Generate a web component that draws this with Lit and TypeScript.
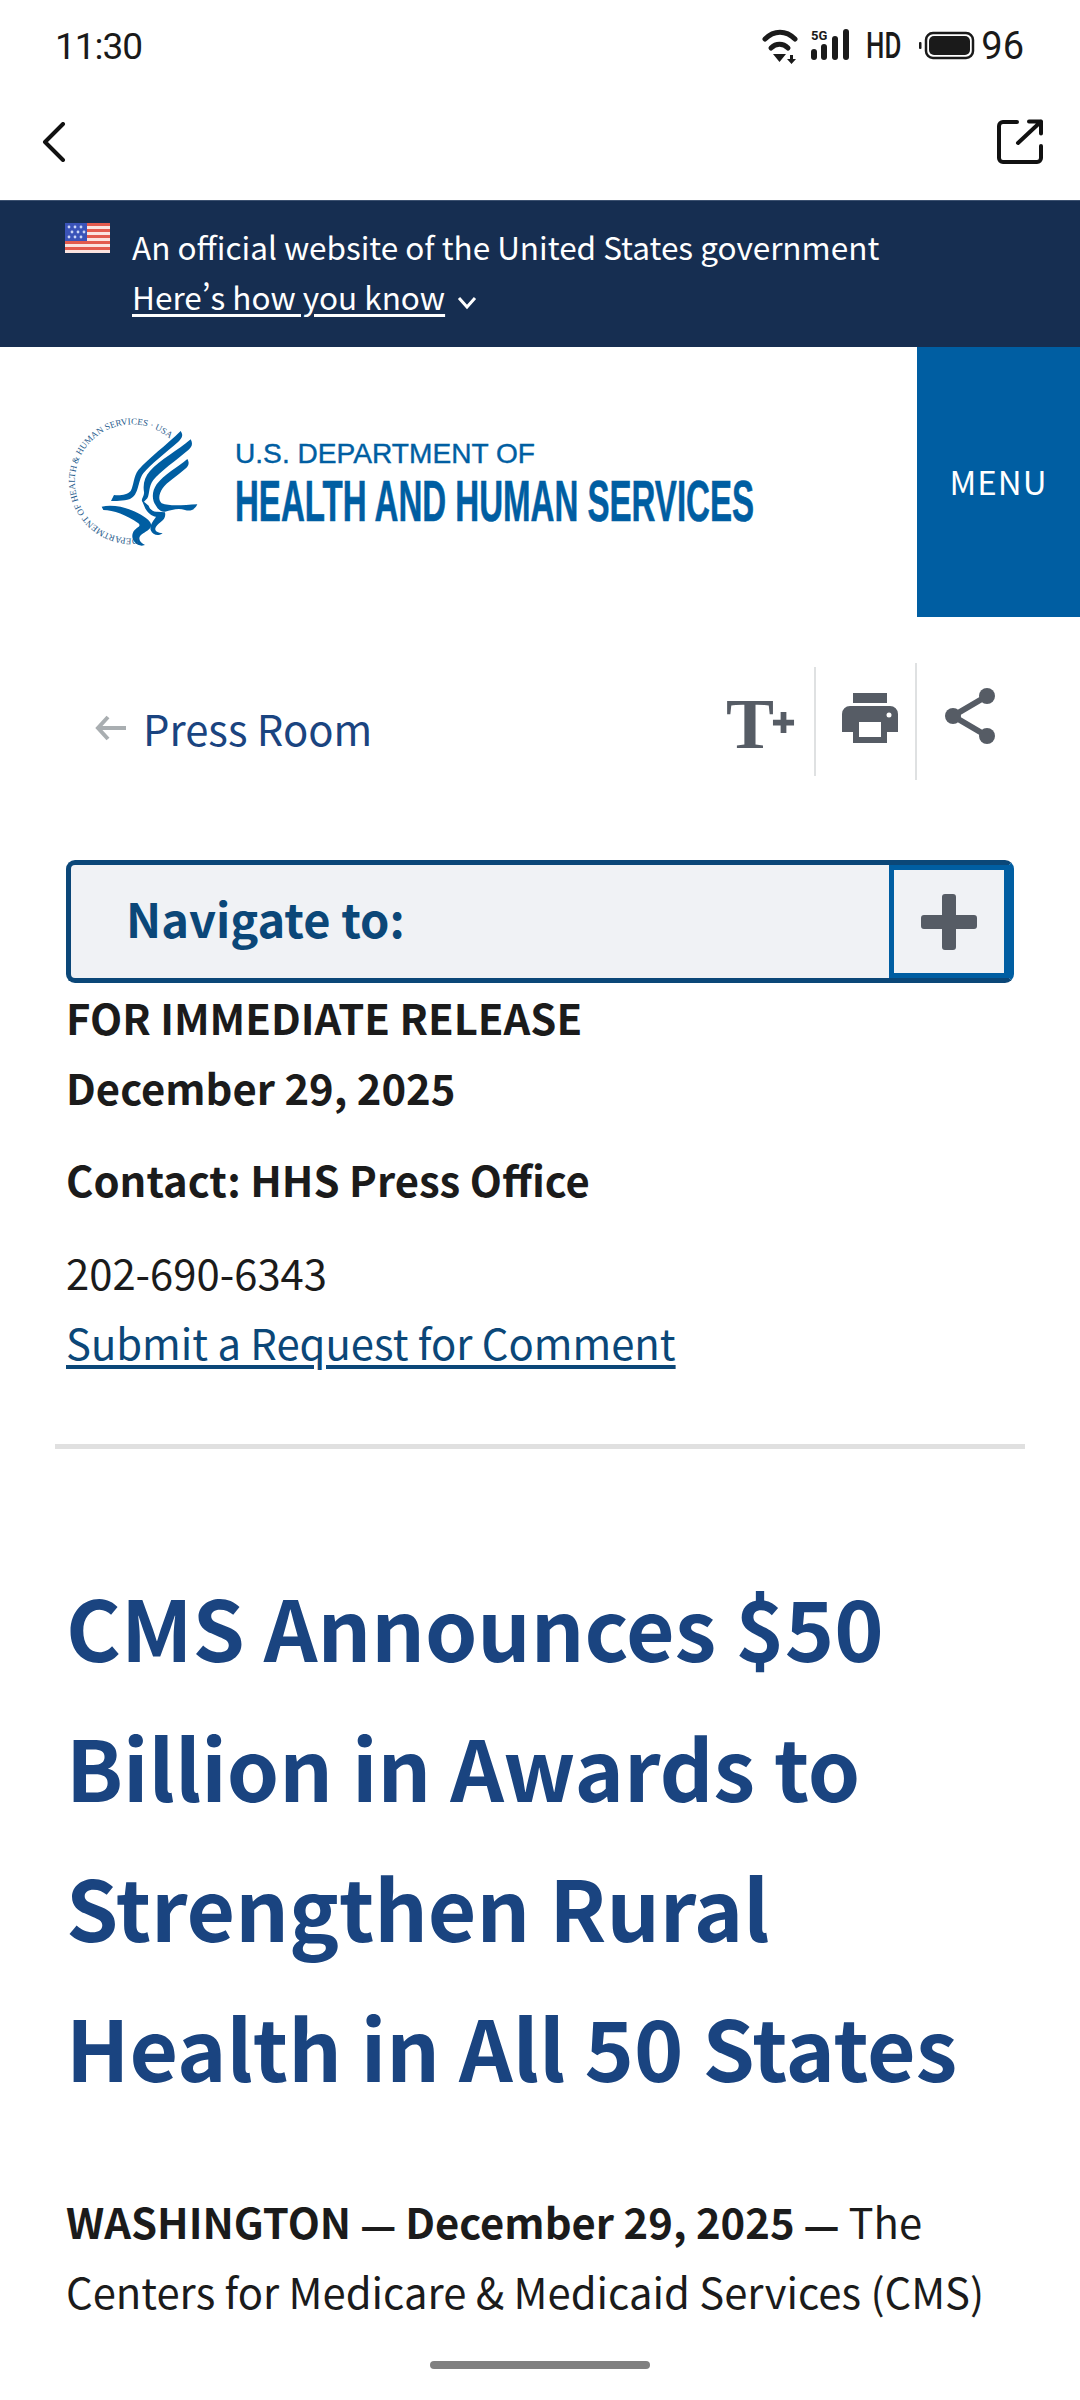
import { LitElement, html, css, svg } from "lit";
import { customElement } from "lit/decorators.js";

const eagle = svg`
  <g transform="scale(0.3333)" fill="#005ea2">
    <path d="M392 108C400 120 398 128 385 140C350 170 300 210 280 235C262 260 268 300 240 312C220 318 195 318 183 318L192 300C210 302 232 300 242 288C252 270 250 245 265 225C295 190 350 150 392 108Z"/>
    <path d="M422 133C430 148 425 155 415 165C380 195 330 230 310 255C295 275 300 295 292 310L282 320L296 332C300 345 312 352 322 350L345 352C350 375 330 380 318 395C312 405 318 412 338 415C325 425 308 420 302 405C298 390 312 375 318 365C305 365 290 350 285 338L278 322C270 312 284 305 282 290C278 265 285 245 300 228C330 195 385 165 422 133Z"/>
    <path d="M412 192C420 205 415 215 405 222C385 240 350 262 338 280C325 300 325 315 335 325C360 335 400 330 442 328C435 345 420 350 405 345C385 338 365 345 345 350C335 352 325 345 318 332C305 315 305 290 320 268C340 240 385 215 412 192Z"/>
    <path d="M155 335C200 325 260 345 295 375C315 395 295 405 280 415C262 425 265 440 285 450L275 452C255 450 240 430 250 410C262 395 275 395 265 385C230 360 190 345 160 345Z"/>
  </g>
  <path id="seal" d="M88 143A57 57 0 1 1 120 44" fill="none"/>
  <text font-family="Liberation Serif, serif" font-size="9" fill="#1f5b8c">
    <textPath href="#seal" textLength="226" lengthAdjust="spacingAndGlyphs">DEPARTMENT OF HEALTH &amp; HUMAN SERVICES · USA</textPath>
  </text>
`;

@customElement("app-root")
export class AppRoot extends LitElement {
  static styles = css`
    :host { display: block; width: 1080px; height: 2400px; overflow: hidden; position: relative; background: #fff;
      font-family: "Noto Sans CJK SC", "Noto Sans", sans-serif; color: #1b1b1b; font-variant-east-asian: proportional-width; }
    .status { height: 92px; display: flex; align-items: center; padding: 0 56px 0 55px; justify-content: space-between; font-family: Roboto, sans-serif; }
    .time { font-size: 37px; color: #1a1a1a; letter-spacing: -1px; }
    .sys { display: flex; align-items: center; }
    .sys svg { display: block; }
    .hd { font-size: 36px; margin: 0 19px 0 9px; color: #1a1a1a; font-weight: 500; display: inline-block; transform: scaleX(.72); transform-origin: left; width: 34px; }
    .pct { font-size: 38px; margin-left: 6px; color: #1a1a1a; }
    .nav { height: 108px; display: flex; align-items: center; justify-content: space-between; padding: 0 37px 8px 42px; box-sizing: border-box; }
    .nav svg { display: block; }
    .banner { height: 147px; box-sizing: border-box; background: #162e51; color: #fff; display: flex; padding: 22px 0 0 65px; border-top: 1px solid #3c5170; }
    .flag { display: block; width: 45px; height: 30px; flex: none; }
    .banner-text { margin: -2px 0 0 22px; font-size: 31.500px; line-height: 50px; }
    .banner-text a { text-decoration: underline; text-underline-offset: 4px; color: #fff; }
    .caret { margin-left: 12px; }
    .header { height: 270px; display: flex; justify-content: space-between; align-items: flex-start; }
    .logo { display: block; margin: 48px 0 0 50px; }
    .menu { width: 163px; height: 270px; box-sizing: border-box; padding-bottom: 2px; background: #005ea2; color: #fff; font-size: 33px; letter-spacing: 1px; display: flex; align-items: center; justify-content: center; }
    .toolbar { height: 243px; display: flex; justify-content: space-between; align-items: flex-start; padding-top: 46px; box-sizing: border-box; }
    .press { display: flex; align-items: center; margin: 21px 0 0 95px; height: 88px; font-size: 41.800px; color: #1a4480; gap: 17px; }
    .tools { display: flex; padding-right: 83px; }
    .tool { display: flex; justify-content: center; box-sizing: border-box; border-right: 2px solid #dfe1e2; }
    .tool.t { width: 90px; height: 109px; margin-top: 4px; padding-top: 30px; justify-content: flex-start; }
    .tword { font-family: "Liberation Serif", serif; font-weight: 700; font-size: 72px; line-height: 54px; color: #565c65; height: 54px; }
    .tool.p { width: 101px; height: 117px; padding: 30px 0 0 8px; }
    .tool.s { border: 0; padding: 24px 0 0 28px; }
    .tool svg { display: block; }
    .navto { margin: 0 66px; height: 123px; box-sizing: border-box; border: 5px solid #0b4778; border-right-color: #005ea2; border-radius: 9px; background: #f0f2f5; display: flex; justify-content: space-between; }
    .navto span { font-size: 47px; font-weight: 700; color: #0b4778; margin-left: 55px; line-height: 106px; }
    .plus { width: 120px; box-sizing: border-box; border: 5px solid #005ea2; display: flex; align-items: center; justify-content: center; }
    .meta { margin-top: -1px; padding: 0 66px; font-size: 41.800px; line-height: 70px; }
    .meta p { margin: 0; }
    .b { font-weight: 700; }
    .meta a { color: #0b4778; text-decoration: underline; text-underline-offset: 5px; }
    hr { border: 0; height: 5px; background: #e0e0e0; margin: 67px 55px 0; }
    h1 { margin: 107px 66px 0; font-size: 83.800px; line-height: 140px; font-weight: 700; color: #1a4480; }
    .article { margin: 70px 66px 0; font-size: 41.800px; line-height: 70px; }
    .article p { margin: 0; }
    .dash { font-family: "Noto Sans", sans-serif; font-size: 35px; line-height: 0; }
    .homebar { position: absolute; left: 430px; width: 220px; top: 2361px; height: 8px; border-radius: 4px; background: #808080; }
  `;

  render() {
    return html`
      <div class="status">
        <div class="time">11:30</div>
        <div class="sys">
          <svg width="96" height="36" viewBox="4 0 96 36">
            <path d="M8 11C17 2 29 2 38 11" fill="none" stroke="#1a1a1a" stroke-width="5" stroke-linecap="round"/>
            <path d="M14 20C19 15 26 15 31 20" fill="none" stroke="#1a1a1a" stroke-width="5" stroke-linecap="round"/>
            <path d="M16 26H29L22.500 34Z" fill="#1a1a1a"/>
            <path d="M33 27h3v4h3l-4.500 5-4.500-5h3z" fill="#1a1a1a"/>
            <text x="54" y="12" font-family="Roboto, sans-serif" font-size="13" font-weight="700" fill="#1a1a1a">5G</text>
            <rect x="54" y="21" width="6" height="11" rx="3" fill="#1a1a1a"/>
            <rect x="64" y="16" width="6" height="16" rx="3" fill="#1a1a1a"/>
            <rect x="75" y="8" width="6" height="24" rx="3" fill="#1a1a1a"/>
            <rect x="86" y="1" width="6" height="31" rx="3" fill="#1a1a1a"/>
          </svg>
          <span class="hd">HD</span>
          <svg width="56" height="30" viewBox="0 0 56 30">
            <rect x="7" y="2" width="47" height="25" rx="7" fill="none" stroke="#1a1a1a" stroke-width="2.500"/>
            <rect x="10" y="5" width="41" height="19" rx="5" fill="#1a1a1a"/>
            <rect x="0" y="11" width="2.500" height="7" rx="1" fill="#1a1a1a"/>
          </svg>
          <span class="pct">96</span>
        </div>
      </div>
      <div class="nav">
        <svg width="24" height="40" viewBox="0 0 24 40"><path d="M21 2L3 20L21 38" fill="none" stroke="#111" stroke-width="4" stroke-linecap="round" stroke-linejoin="round"/></svg>
        <svg width="46" height="46" viewBox="0 0 46 46"><path d="M20 3H6A4 4 0 0 0 2 7V39A4 4 0 0 0 6 43H40A4 4 0 0 0 44 39V27M32 2.500H44V14.500M44 2.500L21 24" fill="none" stroke="#111" stroke-width="4" stroke-linecap="round" stroke-linejoin="round"/></svg>
      </div>
      <div class="banner">
        <svg class="flag" viewBox="0 0 45 30">
          <rect width="45" height="30" fill="#fbe3df"/>
          <rect y="0" width="45" height="3" fill="#e35a4d"/><rect y="6" width="45" height="3" fill="#e35a4d"/><rect y="12" width="45" height="3" fill="#e35a4d"/><rect y="18" width="45" height="3" fill="#e35a4d"/><rect y="24" width="45" height="3" fill="#e35a4d"/>
          <rect width="22" height="18" fill="#3a53b8"/>
          <g fill="#c9d4f5"><circle cx="4" cy="4" r="1.400"/><circle cx="10" cy="4" r="1.400"/><circle cx="16" cy="4" r="1.400"/><circle cx="7" cy="9" r="1.400"/><circle cx="13" cy="9" r="1.400"/><circle cx="19" cy="9" r="1.400"/><circle cx="4" cy="14" r="1.400"/><circle cx="10" cy="14" r="1.400"/><circle cx="16" cy="14" r="1.400"/></g>
        </svg>
        <div class="banner-text">
          <div>An official website of the United States government</div>
          <div><a>Here’s how you know</a><svg class="caret" width="20" height="14" viewBox="0 0 20 14"><path d="M2 2L10 11L18 2" fill="none" stroke="#fff" stroke-width="3"/></svg></div>
        </div>
      </div>
      <div class="header">
        <svg class="logo" width="710" height="165" viewBox="0 0 710 165">
          ${eagle}
          <text x="185" y="68" font-family="Liberation Sans, sans-serif" font-size="28" fill="#005ea2" stroke="#005ea2" stroke-width=".4" textLength="300" lengthAdjust="spacingAndGlyphs">U.S. DEPARTMENT OF</text>
          <text transform="translate(185 126) scale(.58 1)" font-family="Liberation Sans, sans-serif" font-size="57" font-weight="700" fill="#005ea2" stroke="#005ea2" stroke-width=".6">HEALTH AND HUMAN SERVICES</text>
        </svg>
        <div class="menu">MENU</div>
      </div>
      <div class="toolbar">
        <div class="press">
          <svg width="31" height="26" viewBox="0 0 31 26"><path d="M13 2L3 13L13 24M3 13H31" fill="none" stroke="#a9aeb1" stroke-width="4"/></svg>
          <span>Press Room</span>
        </div>
        <div class="tools">
          <div class="tool t">
            <span class="tword">T</span>
            <svg width="23" height="23" viewBox="0 0 24 24" style="margin:14px 0 0 -2px"><path d="M1 12h22M12 1v22" stroke="#565c65" stroke-width="6" fill="none"/></svg>
          </div>
          <div class="tool p">
            <svg width="56" height="50" viewBox="0 0 56 50">
              <rect x="11" y="0" width="34" height="10" fill="#565c65"/>
              <path d="M8 13H48A8 8 0 0 1 56 21V39H45V50H11V39H0V21A8 8 0 0 1 8 13Z" fill="#565c65"/>
              <rect x="17" y="29" width="22" height="15" fill="#fff"/>
              <circle cx="47" cy="22" r="2.500" fill="#fff"/>
            </svg>
          </div>
          <div class="tool s">
            <svg width="52" height="58" viewBox="0 0 52 58">
              <path d="M42 9L8 29L42 49" fill="none" stroke="#565c65" stroke-width="6"/>
              <circle cx="42" cy="9" r="8" fill="#565c65"/><circle cx="8" cy="29" r="8" fill="#565c65"/><circle cx="42" cy="49" r="8" fill="#565c65"/>
            </svg>
          </div>
        </div>
      </div>
      <div class="navto">
        <span>Navigate to:</span>
        <div class="plus">
          <svg width="56" height="56" viewBox="0 0 56 56"><path d="M21 3a3 3 0 0 1 3-3h8a3 3 0 0 1 3 3v18h18a3 3 0 0 1 3 3v8a3 3 0 0 1-3 3H35v18a3 3 0 0 1-3 3h-8a3 3 0 0 1-3-3V35H3a3 3 0 0 1-3-3v-8a3 3 0 0 1 3-3h18z" fill="#565c65"/></svg>
        </div>
      </div>
      <div class="meta">
        <p class="b">FOR IMMEDIATE RELEASE</p>
        <p class="b">December 29, 2025</p>
        <p class="b" style="margin-top:22px">Contact: HHS Press Office</p>
        <p style="margin-top:23px">202-690-6343</p>
        <p><a>Submit a Request for Comment</a></p>
      </div>
      <hr />
      <h1>CMS Announces $50 Billion in Awards to Strengthen Rural Health in All 50 States</h1>
      <div class="article"><p><span class="b">WASHINGTON <span class="dash">—</span> December 29, 2025 <span class="dash">—</span></span> The Centers for Medicare &amp; Medicaid Services (CMS)</p></div>
      <div class="homebar"></div>
    `;
  }
}
